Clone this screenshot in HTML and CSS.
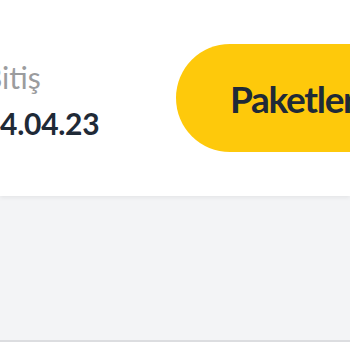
FILE: index.html
```html
<!DOCTYPE html>
<html>
<head>
<meta charset="utf-8">
<link rel="stylesheet" href="styles.css">
</head>
<body>
<div class="page">
  <header class="header">
    <div class="dates">
      <div class="label">Bitiş</div>
      <div class="date">14.04.23</div>
    </div>
    <button class="pkg-btn">Paketler</button>
  </header>
  <main class="content"></main>
  <footer class="footer"></footer>
</div>
</body>
</html>
```

FILE: styles.css
```css
html, body {
  margin: 0;
  padding: 0;
  background: #ffffff;
  overflow: hidden;
}
.page {
  width: 350px;
  height: 350px;
  display: flex;
  flex-direction: column;
  font-family: "Lato", "Liberation Sans", sans-serif;
}
.header {
  height: 196px;
  display: flex;
  align-items: flex-start;
  justify-content: space-between;
  background: #ffffff;
  position: relative;
  z-index: 1;
  box-shadow: 0 2px 4px rgba(0,0,0,0.06);
  overflow: hidden;
}
.dates {
  margin-left: -17px;
  padding-top: 60px;
  display: flex;
  flex-direction: column;
  gap: 12px;
}
.label {
  font-size: 30px;
  color: #9b9c9e;
  line-height: 34px;
}
.date {
  font-size: 30px;
  font-weight: 700;
  letter-spacing: -0.3px;
  color: #1f2a37;
  line-height: 34px;
}
.pkg-btn {
  margin-top: 44px;
  margin-right: -60px;
  width: 234px;
  height: 108px;
  border: none;
  border-radius: 54px;
  background: #fec90b;
  color: #1f2a37;
  font-family: "Lato", "Liberation Sans", sans-serif;
  font-size: 37px;
  font-weight: 700;
  letter-spacing: -1.3px;
  text-align: left;
  padding: 0 0 0 54px;
  flex-shrink: 0;
}
.content {
  flex: 1;
  background: #f3f4f6;
}
.footer {
  height: 8px;
  border-top: 2px solid #dcdde0;
  background: #ffffff;
}
```
